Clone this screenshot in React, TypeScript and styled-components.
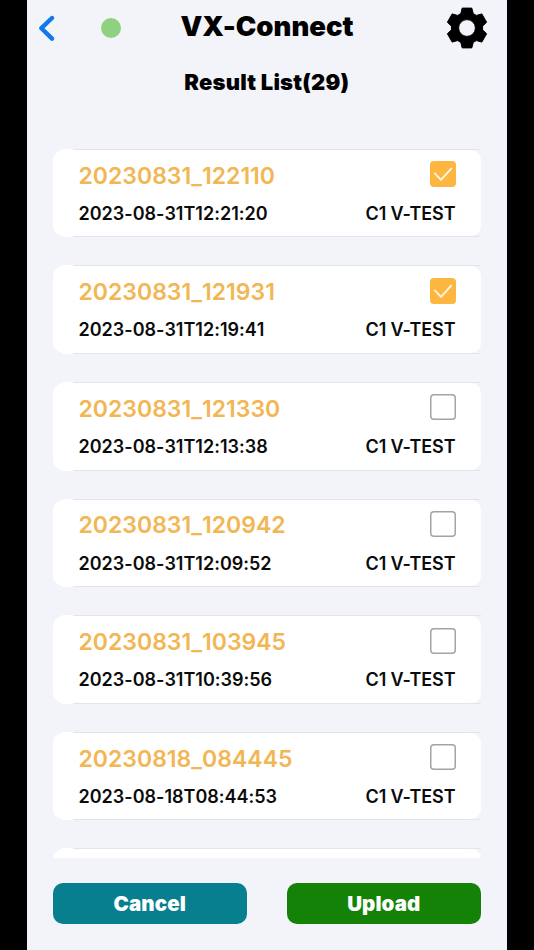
import React from "react";
import styled, { createGlobalStyle } from "styled-components";

const GlobalStyle = createGlobalStyle`
  * { box-sizing: border-box; }
  body {
    margin: 0;
    background: #000;
    font-family: Inter, "Liberation Sans", sans-serif;
    font-feature-settings: "calt" 0;
  }
`;

const Stage = styled.div`
  width: 534px;
  height: 950px;
  background: #000;
  display: flex;
  padding: 0 27.5px 0 27px;
`;

const Screen = styled.main`
  flex: 1;
  min-width: 0;
  display: flex;
  flex-direction: column;
  background: #f3f4f9;
  overflow: hidden;
`;

const Header = styled.header`
  display: grid;
  grid-template-columns: 152px 176px 1fr;
  height: 56px;
  flex: none;
`;

const Leading = styled.div`
  display: flex;
  align-items: center;
  padding-left: 11px;
  gap: 46px;
`;

const Trailing = styled.div`
  display: flex;
  align-items: center;
  justify-content: flex-end;
  padding-right: 18.8px;
`;

const PlainButton = styled.button`
  display: flex;
  padding: 0;
  border: 0;
  background: none;
`;

const StatusDot = styled.span`
  width: 20px;
  height: 20px;
  border-radius: 50%;
  background: #8ed17f;
`;

const Title = styled.h1`
  margin: 0;
  font-size: 27.5px;
  line-height: 53px;
  font-weight: 900;
  letter-spacing: 0;
  text-align: center;
  white-space: nowrap;
`;

const Subtitle = styled.h2`
  margin: 11px 0 0;
  font-size: 22px;
  line-height: 30px;
  font-weight: 900;
  letter-spacing: 0.2px;
  text-align: center;
`;

const List = styled.section`
  margin-top: 51.8px;
  padding: 0 26px;
  height: 709.2px;
  flex: none;
  display: flex;
  flex-direction: column;
  gap: 28px;
  overflow: hidden;
`;

const Card = styled.article`
  height: 88.6px;
  flex: none;
  display: flex;
  padding: 1px 0;
  background:
    linear-gradient(#fff, #fff) 9px 0 / 11px 100% no-repeat,
    linear-gradient(#e4e5e8, #e4e5e8) 20px 0 / 409px 1px no-repeat,
    linear-gradient(#e4e5e8, #e4e5e8) 20px 100% / 409px 1px no-repeat;
`;

const CardBody = styled.div`
  flex: 1;
  display: flex;
  flex-direction: column;
  padding: 11.4px 25px 0 26px;
  border-radius: 10px;
  background: #fff;
`;

const Row = styled.div<{ $height: number }>`
  display: flex;
  justify-content: space-between;
  align-items: center;
  height: ${(p) => p.$height}px;
  white-space: nowrap;
`;

const Name = styled.span`
  font-size: 23px;
  font-weight: 600;
  letter-spacing: 0;
  font-kerning: none;
  margin: 3px 0 0 -0.5px;
  color: #f2b654;
`;

const Detail = styled.span<{ $spacing?: number }>`
  font-size: 18px;
  font-weight: 600;
  letter-spacing: ${(p) => p.$spacing ?? 0}px;
  margin: 3px 0 0 -0.5px;
  color: #0b0b0c;
`;

const Timestamp = styled(Detail)`
  font-kerning: none;
`;

const Checkbox = styled.span<{ $checked: boolean }>`
  width: 26px;
  height: 26px;
  display: flex;
  align-items: center;
  justify-content: center;
  border-radius: 4px;
  box-shadow: ${(p) => (p.$checked ? "none" : "inset 0 0 0 1.5px #a3a3a3")};
  background: ${(p) => (p.$checked ? "#fdb640" : "#fff")};
`;

const Footer = styled.footer`
  display: flex;
  justify-content: space-between;
  padding: 25px 26px 0;
`;

const ActionButton = styled.button<{ $color: string }>`
  width: 193.5px;
  height: 41px;
  padding: 0;
  border: 0;
  border-radius: 10px;
  background: ${(p) => p.$color};
  color: #fff;
  font: 900 20.5px/41px Inter, "Liberation Sans", sans-serif;
  letter-spacing: 0.1px;
`;

const toothOutline: [number, number][] = [
  [-6.2, -14.4],
  [-4.8, -19.9],
  [4.8, -19.9],
  [6.2, -14.4],
];

const gearPath =
  [0, 60, 120, 180, 240, 300]
    .flatMap((deg) => {
      const a = (deg * Math.PI) / 180;
      return toothOutline.map(
        ([x, y]) =>
          `${(x * Math.cos(a) - y * Math.sin(a)).toFixed(2)} ${(x * Math.sin(a) + y * Math.cos(a)).toFixed(2)}`
      );
    })
    .map((point, i) => (i === 0 ? "M" : "L") + point)
    .join("") + "ZM8.4 0A8.4 8.4 0 1 0 -8.4 0A8.4 8.4 0 1 0 8.4 0Z";

const GearIcon = () => (
  <svg width="42" height="42" viewBox="-21 -21 42 42">
    <path d={gearPath} fill="#000" fillRule="evenodd" stroke="#000" strokeWidth="1" strokeLinejoin="round" />
  </svg>
);

const BackIcon = () => (
  <svg width="17" height="28" viewBox="0 0 17 28" fill="none" stroke="#1279ea" strokeWidth="4.4" strokeLinecap="round" strokeLinejoin="round">
    <path d="M14 4L3.4 14.2L14 24.6" />
  </svg>
);

const CheckIcon = () => (
  <svg width="26" height="26" viewBox="0 0 26 26" fill="none" stroke="#fff6e0" strokeWidth="1.9" strokeLinecap="round" strokeLinejoin="round">
    <path d="M4.8 12.4L11 18.8L21.2 7.6" />
  </svg>
);

type Result = { name: string; time: string; checked: boolean };

const results: Result[] = [
  { name: "20230831_122110", time: "2023-08-31T12:21:20", checked: true },
  { name: "20230831_121931", time: "2023-08-31T12:19:41", checked: true },
  { name: "20230831_121330", time: "2023-08-31T12:13:38", checked: false },
  { name: "20230831_120942", time: "2023-08-31T12:09:52", checked: false },
  { name: "20230831_103945", time: "2023-08-31T10:39:56", checked: false },
  { name: "20230818_084445", time: "2023-08-18T08:44:53", checked: false },
];

export default function App() {
  return (
    <>
      <GlobalStyle />
      <Stage>
        <Screen>
          <Header>
            <Leading>
              <PlainButton aria-label="Back"><BackIcon /></PlainButton>
              <StatusDot />
            </Leading>
            <Title>VX-Connect</Title>
            <Trailing>
              <PlainButton aria-label="Settings"><GearIcon /></PlainButton>
            </Trailing>
          </Header>
          <Subtitle>Result List(29)</Subtitle>
          <List>
            {results.map((r) => (
              <Card key={r.name}>
                <CardBody>
                  <Row $height={26}>
                    <Name>{r.name}</Name>
                    <Checkbox $checked={r.checked}>{r.checked && <CheckIcon />}</Checkbox>
                  </Row>
                  <Row $height={51}>
                    <Timestamp>{r.time}</Timestamp>
                    <Detail $spacing={-0.1}>C1 V-TEST</Detail>
                  </Row>
                </CardBody>
              </Card>
            ))}
            <Card><CardBody /></Card>
          </List>
          <Footer>
            <ActionButton $color="#087f8e">Cancel</ActionButton>
            <ActionButton $color="#148206">Upload</ActionButton>
          </Footer>
        </Screen>
      </Stage>
    </>
  );
}
